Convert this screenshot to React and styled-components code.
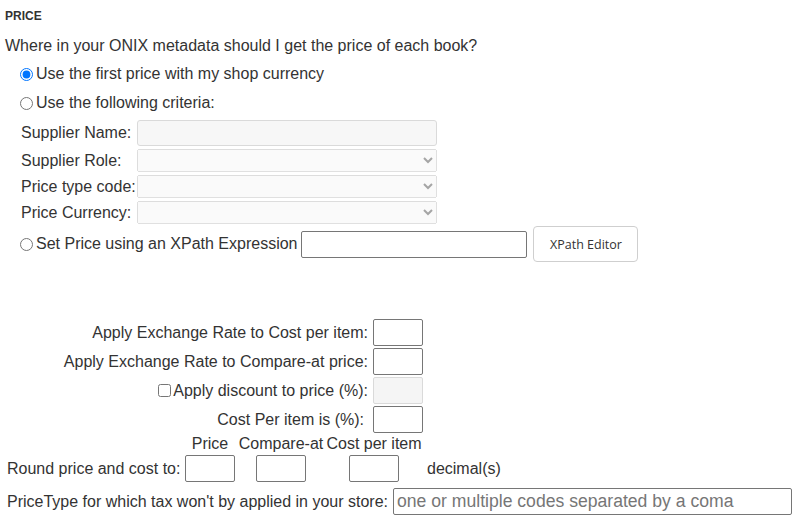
import React from "react";
import styled, { createGlobalStyle } from "styled-components";

const GlobalStyle = createGlobalStyle`
  body {
    margin: 0;
    background: #fff;
    font-family: "Liberation Sans", Arial, sans-serif;
    color: #333;
  }
`;

const Page = styled.div`
  width: 795px;
  padding-top: 9px;
  font-size: 16px;
  line-height: 18px;
`;

const SectionTitle = styled.div`
  margin-left: 5px;
  font-size: 12px;
  font-weight: bold;
  line-height: 14px;
`;

const Question = styled.div`
  margin: 14px 0 0 5px;
`;

const Options = styled.div`
  padding-left: 15px;
  margin-top: 5px;
`;

const RadioRow = styled.label`
  display: flex;
  align-items: center;
  height: 28px;
  margin-bottom: 1px;
`;

const Radio = styled.input.attrs({ type: "radio", name: "price-source" })`
  width: 13px;
  height: 13px;
  margin: 0 3px 0 5px;
`;

const CriteriaGrid = styled.div`
  display: grid;
  grid-template-columns: 116px 300px;
  row-gap: 3px;
  align-items: center;
  padding-left: 6px;
  margin-top: 3px;
`;

const FieldLabel = styled.span`
  white-space: nowrap;
`;

const DisabledText = styled.input`
  box-sizing: border-box;
  width: 300px;
  height: 26px;
  background: #f7f7f7;
  border: 1px solid #dadada;
  border-radius: 3px;
  font: inherit;
`;

const DisabledSelect = styled.select`
  box-sizing: border-box;
  width: 300px;
  height: 23px;
  font: inherit;
  font-size: 14px;
`;

const XPathRow = styled.div`
  display: flex;
  align-items: center;
  height: 36px;
  margin-top: 2px;
`;

const TextBox = styled.input`
  box-sizing: border-box;
  width: ${({ $width }) => $width || 50}px;
  height: 27px;
  margin: 0;
  padding: 1px 3px;
  border: 1px solid ${({ disabled }) => (disabled ? "#dadada" : "#767676")};
  border-radius: 2px;
  background: ${({ disabled }) => (disabled ? "#f5f5f5" : "#fff")};
  font-family: "Liberation Sans", Arial, sans-serif;
  font-size: ${({ $big }) => ($big ? "17.6px" : "16px")};
  color: #333;

  &::placeholder {
    color: #767676;
  }
`;

const EditorButton = styled.button`
  box-sizing: border-box;
  width: 105px;
  height: 36px;
  margin-left: 6px;
  background: #fff;
  border: 1px solid #cfcfcf;
  border-radius: 4px;
  font-family: "Open Sans", sans-serif;
  font-size: 12.5px;
  color: #333;
`;

const ExchangeGrid = styled.div`
  display: grid;
  grid-template-columns: 368px 50px;
  column-gap: 5px;
  row-gap: 2px;
  grid-auto-rows: 27px;
  align-items: center;
  margin-top: 57px;
`;

const RightLabel = styled.label`
  display: flex;
  justify-content: flex-end;
  align-items: center;
  padding-right: ${({ $pad }) => $pad || 0}px;
  white-space: nowrap;
`;

const Check = styled.input.attrs({ type: "checkbox" })`
  width: 13px;
  height: 13px;
  margin: 0 2px 0 0;
`;

const RoundGrid = styled.div`
  display: grid;
  grid-template-columns: 177px 52px 90px 96px auto;
  row-gap: 2px;
  align-items: center;
  padding-left: 7px;
  margin-top: 2px;
`;

const ColHead = styled.span`
  text-align: center;
  white-space: nowrap;
`;

const Cell = styled.div`
  display: flex;
  justify-content: center;
`;

const Decimals = styled.span`
  padding-left: 5px;
`;

const TaxRow = styled.div`
  display: flex;
  align-items: center;
  gap: 5px;
  padding-left: 7px;
  margin-top: 6px;
`;

export default function App() {
  return (
    <>
      <GlobalStyle />
      <Page>
        <SectionTitle>PRICE</SectionTitle>
        <Question>Where in your ONIX metadata should I get the price of each book?</Question>

        <Options>
          <RadioRow>
            <Radio defaultChecked />
            Use the first price with my shop currency
          </RadioRow>
          <RadioRow>
            <Radio />
            Use the following criteria:
          </RadioRow>

          <CriteriaGrid>
            <FieldLabel>Supplier Name:</FieldLabel>
            <DisabledText disabled />
            <FieldLabel>Supplier Role:</FieldLabel>
            <DisabledSelect disabled />
            <FieldLabel>Price type code:</FieldLabel>
            <DisabledSelect disabled />
            <FieldLabel>Price Currency:</FieldLabel>
            <DisabledSelect disabled />
          </CriteriaGrid>

          <XPathRow>
            <Radio />
            Set Price using an XPath Expression
            <TextBox $width={226} style={{ marginLeft: 4 }} />
            <EditorButton>XPath Editor</EditorButton>
          </XPathRow>
        </Options>

        <ExchangeGrid>
          <RightLabel>Apply Exchange Rate to Cost per item:</RightLabel>
          <TextBox />
          <RightLabel>Apply Exchange Rate to Compare-at price:</RightLabel>
          <TextBox />
          <RightLabel>
            <Check />
            Apply discount to price (%):
          </RightLabel>
          <TextBox disabled />
          <RightLabel $pad={4}>Cost Per item is (%):</RightLabel>
          <TextBox />
        </ExchangeGrid>

        <RoundGrid>
          <span />
          <ColHead>Price</ColHead>
          <ColHead>Compare-at</ColHead>
          <ColHead>Cost per item</ColHead>
          <span />
          <FieldLabel>Round price and cost to:</FieldLabel>
          <Cell><TextBox /></Cell>
          <Cell><TextBox /></Cell>
          <Cell><TextBox /></Cell>
          <Decimals>decimal(s)</Decimals>
        </RoundGrid>

        <TaxRow>
          <FieldLabel>PriceType for which tax won't by applied in your store:</FieldLabel>
          <TextBox $width={399} $big placeholder="one or multiple codes separated by a coma" />
        </TaxRow>
      </Page>
    </>
  );
}
